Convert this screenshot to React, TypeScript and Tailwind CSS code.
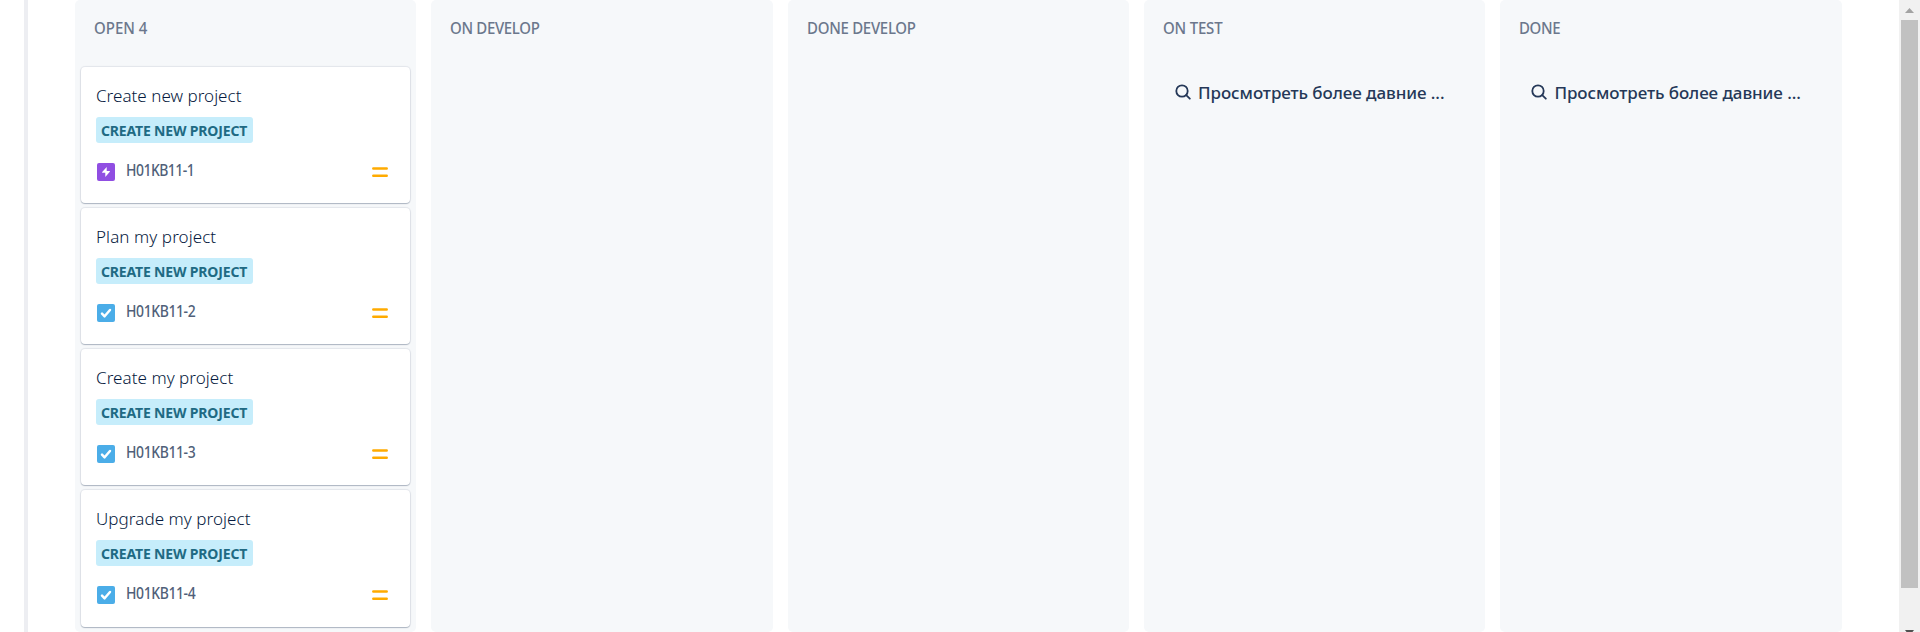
import React from "react";

type Issue = { title: string; issueKey: string; kind: "epic" | "task"; titleSpacing: string; keySpacing: string };

type Column = { name: string; spacing: string; issues: Issue[]; older?: boolean };

const columns: Column[] = [
  {
    name: "OPEN 4",
    spacing: "tracking-[0px]",
    issues: [
      { title: "Create new project", issueKey: "H01KB11-1", kind: "epic", titleSpacing: "tracking-[0.030px]", keySpacing: "tracking-[-0.570px]" },
      { title: "Plan my project", issueKey: "H01KB11-2", kind: "task", titleSpacing: "tracking-[0.080px]", keySpacing: "tracking-[-0.440px]" },
      { title: "Create my project", issueKey: "H01KB11-3", kind: "task", titleSpacing: "tracking-[0.050px]", keySpacing: "tracking-[-0.440px]" },
      { title: "Upgrade my project", issueKey: "H01KB11-4", kind: "task", titleSpacing: "tracking-[0.060px]", keySpacing: "tracking-[-0.440px]" },
    ],
  },
  { name: "ON DEVELOP", spacing: "tracking-[-0.360px]", issues: [] },
  { name: "DONE DEVELOP", spacing: "tracking-[-0.310px]", issues: [] },
  { name: "ON TEST", spacing: "tracking-[-0.210px]", issues: [], older: true },
  { name: "DONE", spacing: "tracking-[-0.410px]", issues: [], older: true },
];

function KindIcon({ kind }: { kind: Issue["kind"] }) {
  return (
    <svg className="h-[18px] w-[18px] shrink-0" viewBox="0 0 18 18">
      <rect width="18" height="18" rx="2" fill={kind === "epic" ? "#904ee2" : "#4bade8"} />
      {kind === "epic" ? (
        <path d="M9.700 4v4h2.700c.5 0 .7.5.4.8l-4.500 5.200v-4.200H5.600c-.5 0-.7-.5-.4-.8z" fill="#fff" />
      ) : (
        <path d="M5 9.600l2.600 2.700L13 6" fill="none" stroke="#fff" strokeWidth="2.500" strokeLinecap="round" strokeLinejoin="round" />
      )}
    </svg>
  );
}

function PriorityIcon() {
  return (
    <svg className="h-[18px] w-[18px]" viewBox="0 0 18 18">
      <path d="M2.300 5.400h13.400M2.300 12.800h13.400" fill="none" stroke="#ffab00" strokeWidth="2.500" strokeLinecap="round" />
    </svg>
  );
}

function IssueCard({ issue }: { issue: Issue }) {
  return (
    <article className="flex h-[136.300px] flex-col rounded-[4px] bg-white px-[15px] pt-[17px] shadow-[0_1px_1px_rgba(9,30,66,0.25),0_0_1px_1px_rgba(9,30,66,0.08)]">
      <h3 className={`h-6 whitespace-nowrap text-[17px] font-light leading-6 text-[#061a40] ${issue.titleSpacing}`}>{issue.title}</h3>
      <span className="mt-[9px] flex h-[26px] w-[157px] shrink-0 items-center rounded-[3px] bg-[#c6edfb] pl-[5px] pt-[2px] text-[14px] font-bold leading-6 tracking-[-0.170px] text-[#206a83] whitespace-nowrap">
        CREATE NEW PROJECT
      </span>
      <div className="mt-[20px] flex h-[18px] items-center pl-[1px] pr-[6px]">
        <KindIcon kind={issue.kind} />
        <span className={`mb-[4px] ml-[11px] origin-left scale-x-[0.872] text-[16px] font-medium leading-[18px] text-[#505f79] ${issue.keySpacing}`}>{issue.issueKey}</span>
        <span className="ml-auto"><PriorityIcon /></span>
      </div>
    </article>
  );
}

export default function App() {
  return (
    <div className="flex h-[632px] w-[1920px] overflow-hidden bg-white font-['Noto_Sans',sans-serif]">
      <div className="ml-6 w-1 shrink-0 bg-[#edeef2]" />
      <main className="ml-[47px] flex w-[1767px] shrink-0 gap-[15px]">
        {columns.map((column) => (
          <section key={column.name} className="h-[632px] w-[341.350px] shrink-0 rounded-[5px] bg-[#f6f8fa] px-[6px]">
            <h2 className="h-[67px] pl-[13px] pt-[17px] text-[16px] font-medium leading-[22px] text-[#6b778c]">
              <span className={`inline-block origin-left scale-x-[0.9375] ${column.spacing}`}>{column.name}</span>
            </h2>
            <div className="flex flex-col gap-[4.800px]">
              {column.issues.map((issue) => <IssueCard key={issue.issueKey} issue={issue} />)}
            </div>
            {column.older && (
              <button className="mt-[12px] flex items-center pl-[25px] text-[17px] font-medium leading-6 text-[#253858] whitespace-nowrap">
                <svg className="-mt-px h-4 w-4 shrink-0" viewBox="0 0 16 16" fill="none" stroke="currentColor" strokeWidth="1.800" strokeLinecap="round">
                  <circle cx="7" cy="7" r="5.700" />
                  <path d="M11.200 11.200l3.600 3.500" />
                </svg>
                <span className="ml-[7px] mt-[2px] tracking-[-0.080px]">Просмотреть более давние ...</span>
              </button>
            )}
          </section>
        ))}
      </main>
      <aside className="ml-auto flex w-[21px] shrink-0 flex-col items-center justify-between bg-[#f1f1f1] pr-px">
        <div className="flex w-[17px] flex-col items-center">
          <svg className="mt-2 h-[5px] w-[9px]" viewBox="0 0 9 5"><path d="M4.500 0L9 5H0z" fill="#a3a3a3" /></svg>
          <div className="mt-[7px] h-[568px] w-[17px] bg-[#c1c1c1]" />
        </div>
        <svg className="h-[2px] w-[9px]" viewBox="0 0 9 2"><path d="M0 0h9L7.500 2h-6z" fill="#505050" /></svg>
      </aside>
    </div>
  );
}
